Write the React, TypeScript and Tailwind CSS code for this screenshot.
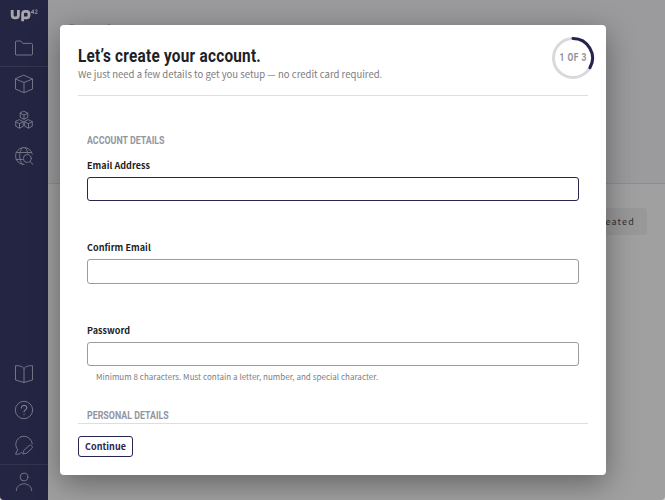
import React from "react";

const sans = "font-['Noto_Sans_CJK_SC',sans-serif]";
const condensed = "font-[Roboto,sans-serif]";

function Icon({ children }: { children: React.ReactNode }) {
  return (
    <svg
      className="h-[18px] w-[18px] overflow-visible"
      viewBox="0 0 18 18"
      fill="none"
      stroke="currentColor"
      strokeWidth="1"
      strokeLinejoin="round"
      strokeLinecap="round"
    >
      {children}
    </svg>
  );
}

function NavItem({ children }: { children: React.ReactNode }) {
  return <div className="flex h-9 items-center justify-center text-[#747486]">{children}</div>;
}

function Sidebar() {
  return (
    <aside className="flex w-12 shrink-0 flex-col bg-[#242543]">
      <div className="flex h-[30px] justify-center pt-[9px]">
        <svg className="h-[13px] w-[28px]" viewBox="0 0 28 13" fill="none" stroke="#a6a6ac">
          <path d="M2.200 1v5.300q0 2.600 2.600 2.600h1q2.600 0 2.600-2.600V1" strokeWidth="2.800" />
          <path d="M12.600 12.200V5q0-2.600 2.500-2.600h1.400q2.500 0 2.500 2.600v1.300q0 2.600-2.500 2.600h-3.700" strokeWidth="2.800" />
          <path d="M23.300 4.700V.8L21 3.600h3.200M25.100 1.500c.6-1.200 2.400-.8 2 .5-.2.700-1.200 1.500-2 2.400h2.500" strokeWidth=".8" />
        </svg>
      </div>
      <NavItem>
        <Icon>
          <path d="M.5 15V3a1 1 0 0 1 1-1h4.300l2 2.400h8.700a1 1 0 0 1 1 1V15a1 1 0 0 1-1 1h-15a1 1 0 0 1-1-1Z" />
        </Icon>
      </NavItem>
      <div className="flex flex-col border-t border-[#34364f]">
        <div className="-mt-px flex flex-col">
          <NavItem>
            <Icon>
              <path d="M9 .3 17.500 4v10L9 17.700.5 14V4ZM.5 4 9 7.500 17.500 4M9 7.500v10.200" />
            </Icon>
          </NavItem>
          <NavItem>
            <Icon>
              <path d="M9 .3 12.800 2.200v4.200L9 8.300 5.200 6.400V2.200ZM5.200 2.200 9 4.100l3.800-1.900M9 4.100v4.200" />
              <path d="M4.500 8.800 8.300 10.700v4.500l-3.800 2-3.800-2v-4.500ZM.7 10.700l3.800 2 3.800-2M4.500 12.700v4.500" />
              <path d="M13.500 8.800 17.300 10.700v4.500l-3.800 2-3.800-2v-4.500ZM9.700 10.700l3.800 2 3.800-2M13.500 12.700v4.500" />
            </Icon>
          </NavItem>
          <NavItem>
            <Icon>
              <path d="M9 17.500A8.500 8.500 0 1 1 17.300 7M1.200 5.500h15.400M1.200 12.500h6.100M7.200.8C3.700 5.700 3.700 12 7.400 17.300M10.200.8c1.500 1.700 2.300 3.600 2.600 5.500" />
              <circle cx="12.300" cy="11.500" r="4" />
              <path d="m15.200 14.500 2.600 3" />
            </Icon>
          </NavItem>
        </div>
      </div>
      <div className="mt-auto flex flex-col">
        <NavItem>
          <Icon>
            <path d="M9 3.500v14L.5 15V.7h2C5.500.8 7.500 1.700 9 3.500 10.500 1.700 12.500.8 15.500.7h2V15L9 17.500" />
          </Icon>
        </NavItem>
        <NavItem>
          <Icon>
            <circle cx="9" cy="9" r="8.700" />
            <path d="M6.400 7c0-3.700 5.400-3.400 5.400-.2C11.800 8.800 9 8.600 9 11M9 13.300v.3" strokeWidth="1.200" />
          </Icon>
        </NavItem>
        <NavItem>
          <Icon>
            <path d="M17.200 7A8.200 8.200 0 1 0 2.700 12.700L.5 17.200c2.800.2 5-.3 6.200-1.700" />
            <path d="m9 13.300 5-4.700c1.800-1.500 4.400.9 2.900 2.800l-5 4.700-3.700.9Z" />
          </Icon>
        </NavItem>
        <div className="h-9 border-t border-[#34364f]">
          <div className="-mt-px">
            <NavItem>
              <Icon>
                <circle cx="9" cy="4" r="3.900" />
                <path d="M1.300 17.700c0-9.300 15.400-9.300 15.400 0" />
              </Icon>
            </NavItem>
          </div>
        </div>
      </div>
    </aside>
  );
}

function SectionTitle({ children }: { children: React.ReactNode }) {
  return (
    <h2 className={`${condensed} h-3 origin-left scale-x-[0.885] whitespace-nowrap text-[10px] leading-3 font-bold text-[#9296a1]`}>
      {children}
    </h2>
  );
}

function Field({ label, active = false }: { label: string; active?: boolean }) {
  return (
    <label className="flex flex-col">
      <span className={`${sans} h-4 text-[9px] leading-4 font-bold tracking-[0.05px] text-[#1d1d21]`}>{label}</span>
      <input
        className={`mt-[3px] h-[24.500px] w-[492px] rounded-[3px] border bg-white px-2 text-xs outline-none ${
          active ? "border-[#28264f]" : "border-[#9c9c9e]"
        }`}
      />
    </label>
  );
}

function Progress() {
  return (
    <div className="relative mt-[11px] -mr-[7px] flex h-11 w-11 items-center justify-center">
      <svg className="absolute inset-0" width="44" height="44" viewBox="0 0 44 44" fill="none" strokeWidth="3">
        <circle cx="22" cy="22" r="19.500" stroke="#d9d9dc" />
        <path d="M22 2.500A19.500 19.500 0 0 1 38.900 31.700" stroke="#24234f" strokeLinecap="round" />
      </svg>
      <span className={`${condensed} relative scale-x-[0.84] whitespace-nowrap text-[10px] leading-3 font-bold tracking-[0.6px] text-[#8f929d]`}>
        1 OF 3
      </span>
    </div>
  );
}

function AccountDialog() {
  return (
    <section className="absolute top-[25px] left-[60px] flex h-[450px] w-[546px] flex-col rounded-[4px] bg-white px-[18px] shadow-[0_8px_30px_rgba(0,0,0,0.38)]">
      <header className="flex h-[71px] justify-between border-b border-[#dedee0]">
        <div className="flex flex-col pt-5">
          <h1 className={`${condensed} h-[21px] origin-left scale-x-[0.85] whitespace-nowrap text-[18px] leading-[22px] font-bold tracking-[0.300px] text-[#202124]`}>
            Let’s create your account.
          </h1>
          <p className={`${sans} h-4 whitespace-nowrap text-[9.500px] leading-4 tracking-[0.02px] text-[#7c7c7f]`}>
            We just need a few details to get you setup — no credit card required.
          </p>
        </div>
        <Progress />
      </header>
      <div className="flex h-[328px] flex-col overflow-hidden border-b border-[#dedee0] pt-[39px] pl-[9px]">
        <SectionTitle>ACCOUNT DETAILS</SectionTitle>
        <div className="mt-[10.500px] flex flex-col gap-[39px]">
          <Field label="Email Address" active />
          <Field label="Confirm Email" />
          <Field label="Password" />
        </div>
        <p className={`${sans} mt-[3px] h-4 pl-[9px] text-[8px] leading-4 tracking-[0.03px] whitespace-nowrap text-[#7c7c7f]`}>
          Minimum 8 characters. Must contain a letter, number, and special character.
        </p>
        <div className="mt-[24.500px]">
          <SectionTitle>PERSONAL DETAILS</SectionTitle>
        </div>
      </div>
      <footer className="flex pt-3">
        <button className={`${sans} h-[21px] w-[55px] rounded-[3px] border border-[#28264f] text-[9px] leading-[19px] font-bold tracking-[0.05px] text-[#28264f]`}>
          Continue
        </button>
      </footer>
    </section>
  );
}

export default function App() {
  return (
    <div className="bg-[#d8d8d8]">
      <div className="relative flex h-[500px] w-[665px] overflow-hidden rounded-b-[4px] bg-[#a0a0a0]">
        <Sidebar />
        <main className="flex flex-1 flex-col">
          <div className="h-[184px] border-b border-[#8d8d94] bg-[#9b9b9d] pt-[22px] pl-[19px]">
            <div className={`${condensed} text-[14px] leading-4 font-bold text-[#77777a]`}>Console</div>
          </div>
          <div className="mt-6 mr-[18px] flex h-[27px] w-[100px] items-center justify-end self-end rounded-[4px] bg-[#989898] pr-3">
            <span className={`${sans} text-[9px] leading-4 tracking-[1.200px] text-[#303033]`}>Created</span>
          </div>
        </main>
        <AccountDialog />
      </div>
    </div>
  );
}
